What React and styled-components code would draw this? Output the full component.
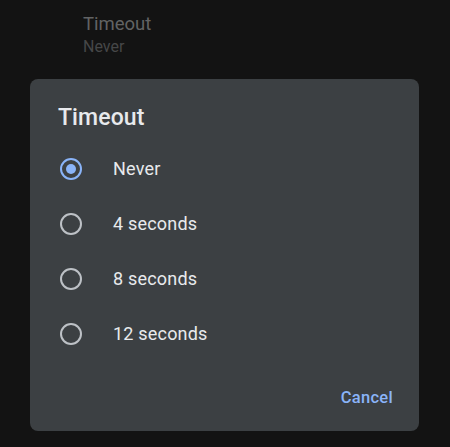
import React, { useState } from 'react';
import styled, { createGlobalStyle } from 'styled-components';

const GlobalStyle = createGlobalStyle`
  html, body {
    margin: 0;
    padding: 0;
    background: #131313;
    font-family: Roboto, "Liberation Sans", sans-serif;
  }
`;

const Page = styled.div`
  width: 450px;
  height: 447px;
  overflow: hidden;
  background: #131313;
`;

const SettingItem = styled.div`
  display: flex;
  flex-direction: column;
  padding: 12px 0 0 83px;
  height: 67px;
  box-sizing: border-box;
  h4 {
    margin: 0;
    font-weight: 400;
    font-size: 18.5px;
    line-height: 24px;
    color: #626364;
  }
  p {
    margin: 0;
    font-size: 16px;
    line-height: 22px;
    color: #464748;
  }
`;

const Dialog = styled.div`
  margin: 12px 31px 0 30px;
  height: 352px;
  background: #3c4043;
  border-radius: 8px;
  display: flex;
  flex-direction: column;
  box-sizing: border-box;
  padding: 24px 26px 0 28px;
`;

const Title = styled.h2`
  margin: 0 0 8px;
  font-size: 23px;
  font-weight: 500;
  line-height: 30px;
  color: #e8eaed;
  letter-spacing: 0.1px;
`;

const Options = styled.div`
  display: flex;
  flex-direction: column;
`;

const Option = styled.label`
  display: flex;
  align-items: center;
  height: 55px;
  gap: 31px;
  padding-left: 2px;
  cursor: pointer;
  font-size: 18px;
  letter-spacing: 0.2px;
  color: #e8eaed;
`;

const Radio = styled.span`
  width: 22px;
  height: 22px;
  box-sizing: border-box;
  border-radius: 50%;
  border: 2px solid ${({ checked }) => (checked ? '#8ab4f8' : '#bdc1c6')};
  display: flex;
  align-items: center;
  justify-content: center;
  &::after {
    content: '';
    width: 10px;
    height: 10px;
    border-radius: 50%;
    background: ${({ checked }) => (checked ? '#8ab4f8' : 'transparent')};
  }
`;

const Footer = styled.div`
  margin-top: auto;
  display: flex;
  justify-content: flex-end;
  padding-bottom: 24px;
`;

const TextButton = styled.button`
  background: none;
  border: none;
  padding: 0;
  font-family: inherit;
  font-size: 16.5px;
  font-weight: 500;
  color: #8ab4f8;
  letter-spacing: 0.3px;
  cursor: pointer;
`;

const choices = ['Never', '4 seconds', '8 seconds', '12 seconds'];

export default function App() {
  const [selected, setSelected] = useState('Never');

  return (
    <Page>
      <GlobalStyle />
      <SettingItem>
        <h4>Timeout</h4>
        <p>{selected}</p>
      </SettingItem>
      <Dialog>
        <Title>Timeout</Title>
        <Options>
          {choices.map((c) => (
            <Option key={c} onClick={() => setSelected(c)}>
              <Radio checked={c === selected} />
              {c}
            </Option>
          ))}
        </Options>
        <Footer>
          <TextButton>Cancel</TextButton>
        </Footer>
      </Dialog>
    </Page>
  );
}
